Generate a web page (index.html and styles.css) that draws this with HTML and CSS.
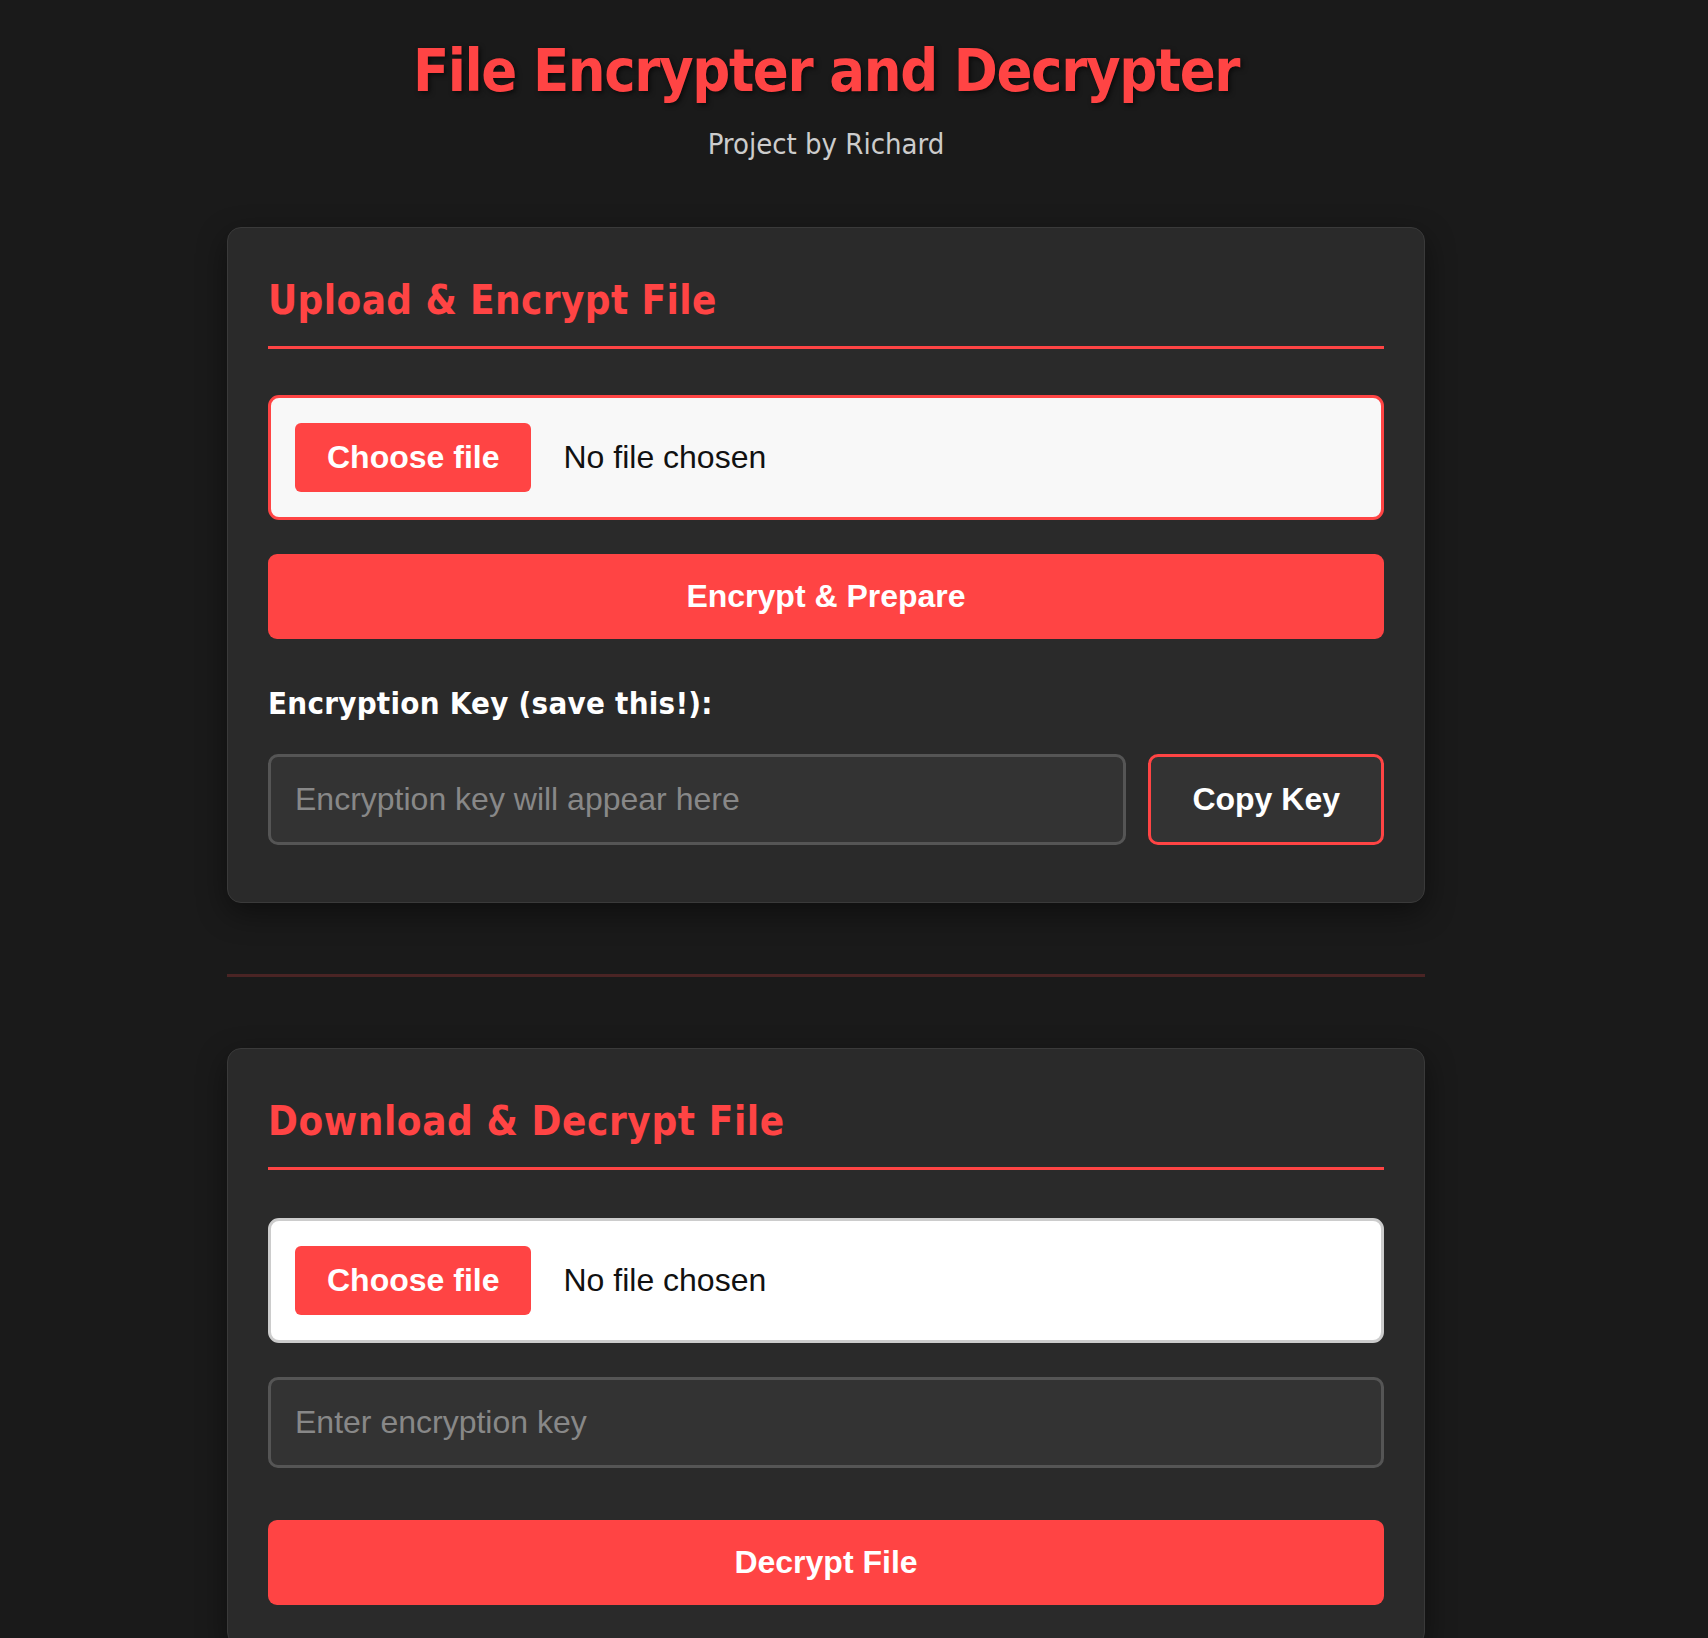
FILE: index.html
```html
<!DOCTYPE html>
<html>

	<head>
		<meta charset="UTF-8">
		<title>File Encrypter and Decrypter</title>
		<link rel="stylesheet" href="styles.css">
	</head>

	<body>
		<div class="wrap">
			<header class="top">
				<h1>File Encrypter and Decrypter</h1>
				<p class="sub">Project by Richard</p>
			</header>

			<!-- encrypt -->
			<section class="card">
				<h2>Upload &amp; Encrypt File</h2>
				<label class="file-box active">
					<input class="file-input" type="file" />
					<span class="file-btn">Choose file</span>
					<span class="file-name">No file chosen</span>
				</label>
				<button class="btn-main">Encrypt &amp; Prepare</button>
				<label class="key-label" for="key-out">Encryption Key (save this!):</label>
				<div class="key-row">
					<input id="key-out" class="field" type="text" readonly placeholder="Encryption key will appear here" />
					<button class="btn-copy">Copy Key</button>
				</div>
			</section>

			<hr class="divider" />

			<!-- decrypt -->
			<section class="card">
				<h2 class="wide">Download &amp; Decrypt File</h2>
				<label class="file-box">
					<input class="file-input" type="file" />
					<span class="file-btn">Choose file</span>
					<span class="file-name">No file chosen</span>
				</label>
				<input class="field field-key" type="text" placeholder="Enter encryption key" />
				<button class="btn-main btn-decrypt">Decrypt File</button>
			</section>
		</div>
	</body>

</html>
```

FILE: styles.css
```css
* {
	box-sizing: border-box;
}

body {
	margin: 0;
	background-color: #1a1a1a;
	font-family: "Liberation Sans", Arial, sans-serif;
}

.wrap {
	width: 1198px;
	margin-left: 227px;
	padding-top: 36px;
}

.top {
	text-align: center;
}

h1 {
	margin: 0;
	font-family: "DejaVu Sans Condensed", "DejaVu Sans", sans-serif;
	font-size: 59px;
	line-height: 1.2;
	font-weight: bold;
	letter-spacing: -1.4px;
	color: #ff4444;
	text-shadow: 2px 2px 5px rgba(0, 0, 0, 0.6);
}

.sub {
	margin: 20px 0 0;
	font-family: "DejaVu Sans Condensed", "DejaVu Sans", sans-serif;
	font-size: 29px;
	line-height: 1.2;
	color: #cccccc;
}

.card {
	margin-top: 65px;
	background-color: #2a2a2a;
	border: 1px solid #3a3a3a;
	border-radius: 14px;
	padding: 40px;
	box-shadow: 0 10px 30px rgba(0, 0, 0, 0.45);
}

h2 {
	margin: 8px 0 46px;
	padding-bottom: 22px;
	border-bottom: 3px solid #ff4444;
	font-family: "DejaVu Sans Condensed", "DejaVu Sans", sans-serif;
	font-size: 40px;
	line-height: 1.2;
	letter-spacing: 0.4px;
	color: #ff4444;
}

h2.wide {
	margin-bottom: 48px;
	letter-spacing: 0.6px;
}

.file-box {
	display: flex;
	align-items: center;
	gap: 32px;
	padding: 25px 24px;
	background-color: #ffffff;
	border: 3px solid #cccccc;
	border-radius: 11px;
	cursor: pointer;
}

.file-box.active {
	background-color: #f8f8f8;
	border-color: #ff4444;
}

.file-input {
	display: none;
}

.file-btn {
	padding: 16px 32px;
	background-color: #ff4444;
	border-radius: 6px;
	color: #fff;
	font-size: 32px;
	line-height: 37px;
	font-weight: bold;
}

.file-name {
	font-size: 32px;
	line-height: 37px;
	color: #111;
}

.btn-main {
	display: block;
	width: 100%;
	margin-top: 34px;
	padding: 24px;
	background-color: #ff4444;
	border: none;
	border-radius: 9px;
	color: #fff;
	font-family: "Liberation Sans", Arial, sans-serif;
	font-size: 32px;
	line-height: 37px;
	font-weight: bold;
	cursor: pointer;
}

.key-label {
	display: block;
	margin: 46px 0 33px;
	font-family: "DejaVu Sans Condensed", "DejaVu Sans", sans-serif;
	font-size: 31px;
	line-height: 36px;
	font-weight: bold;
	letter-spacing: 0.25px;
	color: #fff;
}

.key-row {
	display: flex;
	gap: 22px;
	margin-bottom: 17px;
}

.field {
	display: block;
	width: 100%;
	padding: 24px;
	background-color: #333333;
	border: 3px solid #555555;
	border-radius: 10px;
	color: #fff;
	font-family: "Liberation Sans", Arial, sans-serif;
	font-size: 32px;
	line-height: 37px;
	outline: none;
}

.key-row .field {
	flex: 1;
}

.field::placeholder {
	color: #888888;
}

.field-key {
	margin-top: 34px;
}

.btn-copy {
	flex: none;
	padding: 0 41px;
	background-color: #333333;
	border: 3px solid #ff4444;
	border-radius: 10px;
	color: #fff;
	font-family: "Liberation Sans", Arial, sans-serif;
	font-size: 32px;
	font-weight: bold;
	cursor: pointer;
}

.btn-decrypt {
	margin-top: 52px;
}

.divider {
	height: 3px;
	margin: 71px 0 0;
	border: none;
	background-color: #4a2424;
}

.divider + .card {
	margin-top: 71px;
}
```
